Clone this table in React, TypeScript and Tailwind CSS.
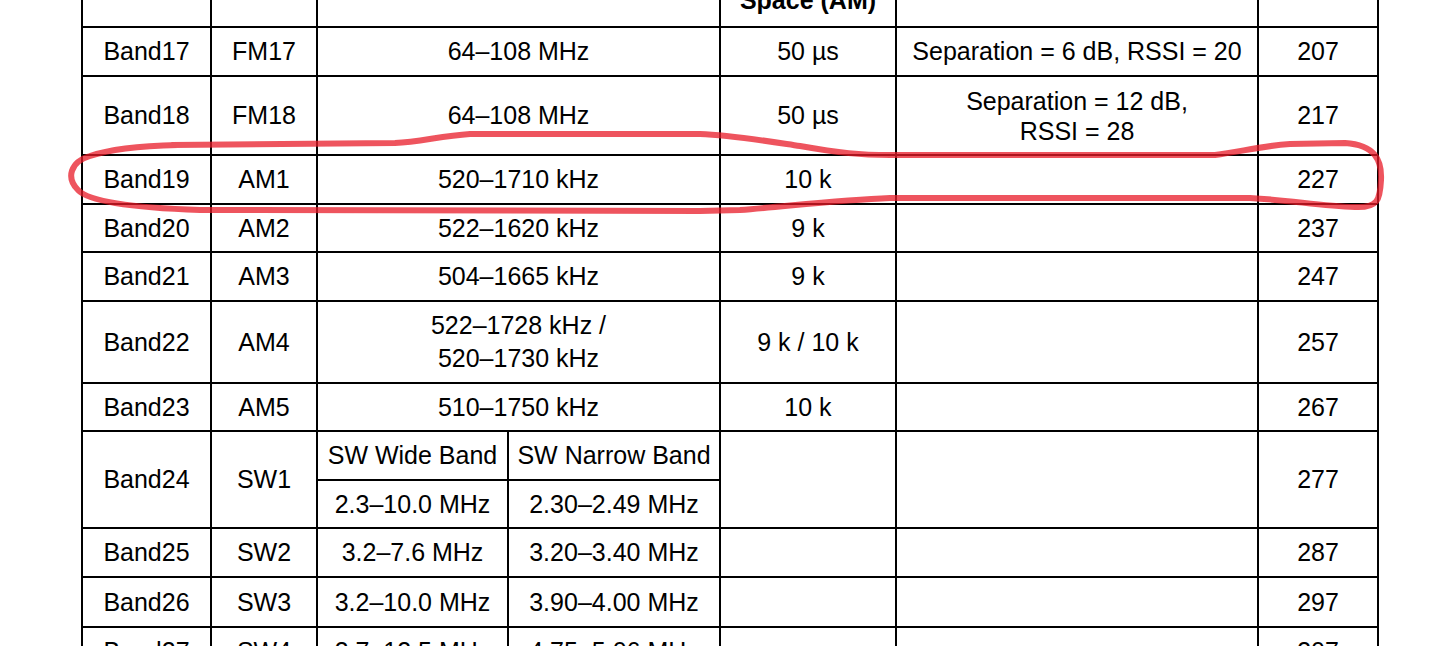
import React from "react";

type Row = {
  band: string;
  mode: string;
  range: React.ReactNode;
  space: React.ReactNode;
  stereo?: React.ReactNode;
  reg: string;
  h: string;
};

const rows: Row[] = [
  { band: "Band17", mode: "FM17", range: "64–108 MHz", space: "50 µs", stereo: "Separation = 6 dB, RSSI = 20", reg: "207", h: "h-[49px]" },
  {
    band: "Band18",
    mode: "FM18",
    range: "64–108 MHz",
    space: "50 µs",
    stereo: (
      <span className="block leading-[30px]">
        Separation = 12 dB,
        <br />
        RSSI = 28
      </span>
    ),
    reg: "217",
    h: "h-[79px]",
  },
  { band: "Band19", mode: "AM1", range: "520–1710 kHz", space: "10 k", reg: "227", h: "h-[49px]" },
  { band: "Band20", mode: "AM2", range: "522–1620 kHz", space: "9 k", reg: "237", h: "h-[48px]" },
  { band: "Band21", mode: "AM3", range: "504–1665 kHz", space: "9 k", reg: "247", h: "h-[49px]" },
  {
    band: "Band22",
    mode: "AM4",
    range: (
      <span className="block leading-[33px]">
        522–1728 kHz /
        <br />
        520–1730 kHz
      </span>
    ),
    space: "9 k / 10 k",
    reg: "257",
    h: "h-[82px]",
  },
  { band: "Band23", mode: "AM5", range: "510–1750 kHz", space: "10 k", reg: "267", h: "h-[48px]" },
];

const swRows = [
  { band: "Band25", mode: "SW2", wide: "3.2–7.6 MHz", narrow: "3.20–3.40 MHz", reg: "287", h: "h-[49px]" },
  { band: "Band26", mode: "SW3", wide: "3.2–10.0 MHz", narrow: "3.90–4.00 MHz", reg: "297", h: "h-[50px]" },
  { band: "Band27", mode: "SW4", wide: "3.7–12.5 MHz", narrow: "4.75–5.06 MHz", reg: "307", h: "h-[49px]" },
];

const td = "border-2 border-black text-center align-middle p-0";
const thBottom = "border-2 border-black text-center align-bottom px-0 pt-0 pb-[11px] font-bold";

export default function App() {
  return (
    <div
      className="relative h-[646px] w-[1437px] overflow-hidden bg-white text-black text-[25px] leading-[29px]"
      style={{ fontFamily: '"Liberation Sans", Arial, sans-serif' }}
    >
      <table className="ml-[81px] -mt-[94px] w-[1296px] table-fixed border-collapse">
        <colgroup>
          <col className="w-[129px]" />
          <col className="w-[106px]" />
          <col className="w-[191px]" />
          <col className="w-[212px]" />
          <col className="w-[176px]" />
          <col className="w-[362px]" />
          <col className="w-[120px]" />
        </colgroup>
        <thead>
          <tr className="h-[120px]">
            <th className={td} />
            <th className={td} />
            <th className={td} colSpan={2} />
            <th className={thBottom}>Space (AM)</th>
            <th className={td} />
            <th className={td} />
          </tr>
        </thead>
        <tbody>
          {rows.map((r) => (
            <tr key={r.band} className={r.h}>
              <td className={td}>{r.band}</td>
              <td className={td}>{r.mode}</td>
              <td className={td} colSpan={2}>
                {r.range}
              </td>
              <td className={td}>{r.space}</td>
              <td className={td}>{r.stereo}</td>
              <td className={td}>{r.reg}</td>
            </tr>
          ))}

          {/* SW1 with wide / narrow split */}
          <tr className="h-[49px]">
            <td className={td} rowSpan={2}>Band24</td>
            <td className={td} rowSpan={2}>SW1</td>
            <td className={td}>SW Wide Band</td>
            <td className={td}>SW Narrow Band</td>
            <td className={td} rowSpan={2} />
            <td className={td} rowSpan={2} />
            <td className={td} rowSpan={2}>277</td>
          </tr>
          <tr className="h-[48px]">
            <td className={td}>2.3–10.0 MHz</td>
            <td className={td}>2.30–2.49 MHz</td>
          </tr>

          {swRows.map((r) => (
            <tr key={r.band} className={r.h}>
              <td className={td}>{r.band}</td>
              <td className={td}>{r.mode}</td>
              <td className={td}>{r.wide}</td>
              <td className={td}>{r.narrow}</td>
              <td className={td} />
              <td className={td} />
              <td className={td}>{r.reg}</td>
            </tr>
          ))}
        </tbody>
      </table>

      {/* hand-drawn red mark around Band19 */}
      <svg
        className="pointer-events-none absolute left-0 top-0"
        width="1437"
        height="646"
        viewBox="0 0 1437 646"
      >
        <path
          d="M 172 145 L 395 143 C 420 142, 440 136, 470 134 L 700 134 C 730 135, 760 140, 800 146 C 840 153, 860 155, 890 155 L 1215 155 C 1240 152, 1260 146, 1290 144 L 1345 143 C 1375 145, 1382 160, 1381 180 C 1380 200, 1378 208, 1355 207 C 1320 206, 1290 200, 1250 198 L 890 198 C 840 200, 790 206, 740 210 L 700 211 L 200 210 C 140 208, 90 203, 78 190 C 66 178, 70 162, 90 156 C 110 149, 140 146, 178 145"
          fill="none"
          stroke="rgba(232,27,40,0.75)"
          strokeWidth="6"
          strokeLinecap="round"
          strokeLinejoin="round"
        />
      </svg>
    </div>
  );
}
